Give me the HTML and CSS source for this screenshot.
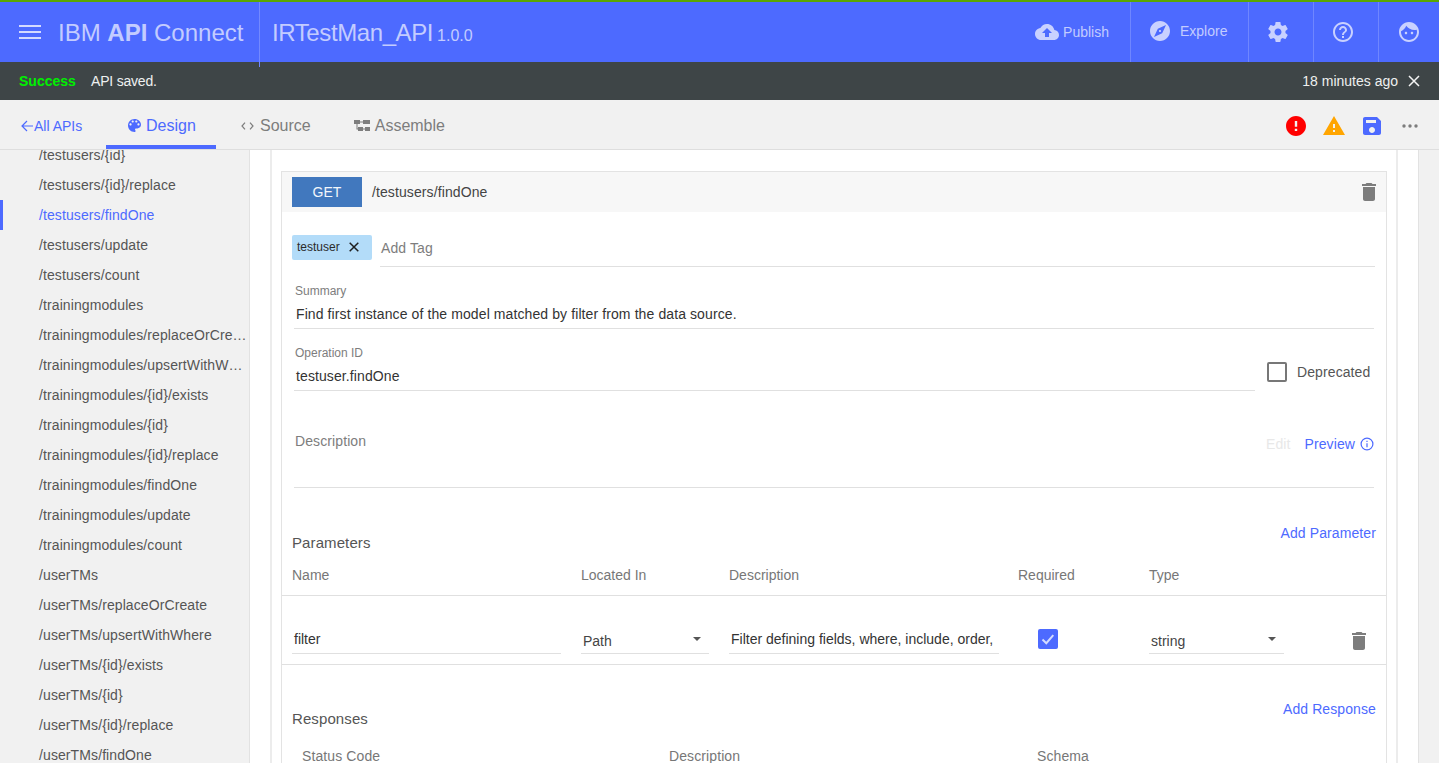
FILE: index.html
```html
<!DOCTYPE html>
<html lang="en">
<head>
  <meta charset="UTF-8">
  <title>IBM API Connect</title>
  <link rel="stylesheet" href="styles.css">
</head>
<body>
  <header class="topbar">
    <div class="brand">
      <svg class="menu-icon" width="22" height="14" viewBox="0 0 22 14"><path d="M0 0h22v2H0zM0 6h22v2H0zM0 12h22v2H0z"/></svg>
      <span class="brand-name">IBM <b>API</b> Connect</span>
    </div>
    <div class="api-title">IRTestMan_API <small>1.0.0</small></div>
    <div class="top-actions">
      <div class="top-item publish">
        <svg width="24" height="24" viewBox="0 0 24 24"><path d="M19.35 10.04C18.67 6.59 15.64 4 12 4 9.11 4 6.6 5.64 5.35 8.04 2.34 8.36 0 10.91 0 14c0 3.31 2.69 6 6 6h13c2.76 0 5-2.24 5-5 0-2.64-2.05-4.78-4.65-4.96zM14 13v4h-4v-4H7l5-5 5 5h-3z"/></svg>
        Publish
      </div>
      <div class="top-item explore">
        <svg width="24" height="24" viewBox="0 0 24 24"><path d="M12 10.9c-.61 0-1.1.49-1.1 1.1s.49 1.1 1.1 1.1c.61 0 1.1-.49 1.1-1.1s-.49-1.1-1.1-1.1zM12 2C6.48 2 2 6.48 2 12s4.48 10 10 10 10-4.48 10-10S17.52 2 12 2zm2.19 12.19L6 18l3.81-8.19L18 6l-3.81 8.19z"/></svg>
        Explore
      </div>
      <div class="top-item icon-only">
        <svg width="24" height="24" viewBox="0 0 24 24"><path d="M19.43 12.98c.04-.32.07-.64.07-.98s-.03-.66-.07-.98l2.11-1.65c.19-.15.24-.42.12-.64l-2-3.46c-.12-.22-.39-.3-.61-.22l-2.49 1c-.52-.4-1.08-.73-1.69-.98l-.38-2.65C14.46 2.18 14.25 2 14 2h-4c-.25 0-.46.18-.49.42l-.38 2.65c-.61.25-1.17.59-1.69.98l-2.49-1c-.23-.09-.49 0-.61.22l-2 3.46c-.13.22-.07.49.12.64l2.11 1.65c-.04.32-.07.65-.07.98s.03.66.07.98l-2.11 1.65c-.19.15-.24.42-.12.64l2 3.46c.12.22.39.3.61.22l2.49-1c.52.4 1.08.73 1.69.98l.38 2.65c.03.24.24.42.49.42h4c.25 0 .46-.18.49-.42l.38-2.65c.61-.25 1.17-.59 1.69-.98l2.49 1c.23.09.49 0 .61-.22l2-3.46c.12-.22.07-.49-.12-.64l-2.11-1.65zM12 15.5c-1.93 0-3.5-1.57-3.5-3.5s1.57-3.5 3.5-3.5 3.5 1.57 3.5 3.5-1.57 3.5-3.5 3.5z"/></svg>
      </div>
      <div class="top-item icon-only">
        <svg width="24" height="24" viewBox="0 0 24 24"><path d="M11 18h2v-2h-2v2zm1-16C6.48 2 2 6.48 2 12s4.48 10 10 10 10-4.48 10-10S17.52 2 12 2zm0 18c-4.41 0-8-3.59-8-8s3.59-8 8-8 8 3.59 8 8-3.59 8-8 8zm0-14c-2.21 0-4 1.79-4 4h2c0-1.1.9-2 2-2s2 .9 2 2c0 2-3 1.75-3 5h2c0-2.25 3-2.5 3-5 0-2.21-1.79-4-4-4z"/></svg>
      </div>
      <div class="top-item icon-only last">
        <svg width="24" height="24" viewBox="0 0 24 24"><path d="M9 11.75c-.69 0-1.25.56-1.25 1.25s.56 1.25 1.25 1.25 1.25-.56 1.25-1.25-.56-1.25-1.25-1.25zm6 0c-.69 0-1.25.56-1.25 1.25s.56 1.25 1.25 1.25 1.25-.56 1.25-1.25-.56-1.25-1.25-1.25zM12 2C6.48 2 2 6.48 2 12s4.48 10 10 10 10-4.48 10-10S17.52 2 12 2zm0 18c-4.41 0-8-3.59-8-8 0-.29.02-.58.05-.86 2.36-1.05 4.23-2.98 5.21-5.37C11.07 8.33 14.05 10 17.42 10c.78 0 1.53-.09 2.25-.26.21.71.33 1.47.33 2.26 0 4.41-3.59 8-8 8z"/></svg>
      </div>
    </div>
  </header>

  <div class="alert">
    <span class="alert-title">Success</span>
    <span class="alert-text">API saved.</span>
    <span class="alert-time">18 minutes ago</span>
    <svg class="alert-close" width="12" height="12" viewBox="0 0 12 12"><path d="M1 1l10 10M11 1L1 11"/></svg>
  </div>

  <nav class="tabs">
    <a class="back-link">
      <svg width="12" height="12" viewBox="0 0 12 12"><path d="M6 1L1 6l5 5M1 6h11"/></svg>All APIs
    </a>
    <a class="tab active">
      <svg width="13" height="13" viewBox="3 3 18 18"><path d="M12 3c-4.97 0-9 4.03-9 9s4.03 9 9 9c.83 0 1.5-.67 1.5-1.5 0-.39-.15-.74-.39-1.01-.23-.26-.38-.61-.38-.99 0-.83.67-1.5 1.5-1.5H16c2.76 0 5-2.24 5-5 0-4.42-4.03-8-9-8zm-5.5 9c-.83 0-1.5-.67-1.5-1.5S5.67 9 6.5 9 8 9.67 8 10.5 7.33 12 6.5 12zm3-4C8.67 8 8 7.33 8 6.5S8.67 5 9.5 5s1.5.67 1.5 1.5S10.33 8 9.5 8zm5 0c-.83 0-1.5-.67-1.5-1.5S13.67 5 14.5 5s1.5.67 1.5 1.5S15.33 8 14.5 8zm3 4c-.83 0-1.5-.67-1.5-1.5S16.67 9 17.5 9s1.5.67 1.5 1.5-.67 1.5-1.5 1.5z"/></svg>
      Design
    </a>
    <a class="tab source">
      <svg class="code-icon" width="13" height="8" viewBox="0 0 13 8"><path d="M4 .7L1 4l3 3.3M9 .7L12 4 9 7.3"/></svg>
      Source
    </a>
    <a class="tab assemble">
      <svg width="16" height="12" viewBox="0 0 16 12"><path d="M0 0h6v4H0zM9 0h7v4H9zM6 1.500h3v1H6zM4 7h5v4H4zM11 7h5v4h-5zM9 8.500h2v1H9zM2.500 4h1v4.500h-1zM2.500 8.500H4v1H2.500z"/></svg>
      Assemble
    </a>
    <div class="tab-tools">
      <svg class="tool-error" width="24" height="24" viewBox="0 0 24 24"><path d="M12 2C6.48 2 2 6.48 2 12s4.480 10 10 10 10-4.480 10-10S17.520 2 12 2zm1.200 15h-2.400v-2.300h2.400V17zm0-4.300h-2.400V7h2.400v5.700z"/></svg>
      <svg class="tool-warn" width="24" height="24" viewBox="0 0 24 24"><path d="M1 21h22L12 2 1 21zm12-3h-2v-2h2v2zm0-4h-2v-4h2v4z"/></svg>
      <svg class="tool-save" width="24" height="24" viewBox="0 0 24 24"><path d="M17 3H5c-1.110 0-2 .9-2 2v14c0 1.100.89 2 2 2h14c1.100 0 2-.9 2-2V7l-4-4zm-5 16c-1.660 0-3-1.340-3-3s1.340-3 3-3 3 1.340 3 3-1.340 3-3 3zm4-10H6V6h10v3z"/></svg>
      <svg class="tool-more" width="16" height="4" viewBox="0 0 16 4"><circle cx="2" cy="2" r="1.700"/><circle cx="8" cy="2" r="1.700"/><circle cx="14" cy="2" r="1.700"/></svg>
    </div>
  </nav>

  <div class="layout">
    <aside class="sidebar">
      <ul class="path-list">
        <li>/testusers/{id}</li>
        <li>/testusers/{id}/replace</li>
        <li class="selected">/testusers/findOne</li>
        <li>/testusers/update</li>
        <li>/testusers/count</li>
        <li>/trainingmodules</li>
        <li>/trainingmodules/replaceOrCreate</li>
        <li>/trainingmodules/upsertWithWhere</li>
        <li>/trainingmodules/{id}/exists</li>
        <li>/trainingmodules/{id}</li>
        <li>/trainingmodules/{id}/replace</li>
        <li>/trainingmodules/findOne</li>
        <li>/trainingmodules/update</li>
        <li>/trainingmodules/count</li>
        <li>/userTMs</li>
        <li>/userTMs/replaceOrCreate</li>
        <li>/userTMs/upsertWithWhere</li>
        <li>/userTMs/{id}/exists</li>
        <li>/userTMs/{id}</li>
        <li>/userTMs/{id}/replace</li>
        <li>/userTMs/findOne</li>
      </ul>
    </aside>

    <main class="main">
      <section class="panel">
        <div class="card">
          <div class="op-header">
            <span class="method">GET</span>
            <span class="op-path">/testusers/findOne</span>
            <svg class="trash" width="24" height="24" viewBox="0 0 24 24"><path d="M6 19c0 1.100.9 2 2 2h8c1.100 0 2-.9 2-2V7H6v12zM19 4h-3.500l-1-1h-5l-1 1H5v2h14V4z"/></svg>
          </div>

          <div class="tag-row">
            <span class="chip">testuser
              <svg width="10" height="10" viewBox="0 0 10 10"><path d="M.7.7l8.600 8.600M9.300.7L.7 9.300"/></svg>
            </span>
            <div class="tag-input">Add Tag</div>
          </div>

          <div class="fields">
            <div class="field">
              <div class="field-label">Summary</div>
              <div class="field-value">Find first instance of the model matched by filter from the data source.</div>
            </div>
            <div class="field-row">
              <div class="field grow">
                <div class="field-label">Operation ID</div>
                <div class="field-value">testuser.findOne</div>
              </div>
              <label class="deprecated"><span class="checkbox"></span>Deprecated</label>
            </div>
            <div class="description">
              <span class="description-label">Description</span>
              <span class="edit-link">Edit</span>
              <span class="preview-link">Preview
                <svg width="14" height="14" viewBox="0 0 14 14"><circle cx="7" cy="7" r="5.900"/><path d="M7 6.200v4M7 3.700v1.300"/></svg>
              </span>
            </div>
          </div>

          <div class="section-head params-head">
            <h3>Parameters</h3>
            <a class="add-link">Add Parameter</a>
          </div>
          <div class="param-grid param-labels">
            <span>Name</span>
            <span>Located In</span>
            <span>Description</span>
            <span>Required</span>
            <span>Type</span>
          </div>
          <div class="param-grid param-row">
            <div class="cell-input name-cell">filter</div>
            <div class="cell-select located-cell">Path<i class="caret"></i></div>
            <div class="cell-input desc-cell">Filter defining fields, where, include, order,</div>
            <span class="checkbox checked">
              <svg width="20" height="20" viewBox="0 0 20 20"><path d="M4.500 10.500l3.800 3.700 7-8"/></svg>
            </span>
            <div class="cell-select type-cell">string<i class="caret"></i></div>
            <svg class="trash row-trash" width="24" height="24" viewBox="0 0 24 24"><path d="M6 19c0 1.100.9 2 2 2h8c1.100 0 2-.9 2-2V7H6v12zM19 4h-3.500l-1-1h-5l-1 1H5v2h14V4z"/></svg>
          </div>

          <div class="section-head responses-head">
            <h3>Responses</h3>
            <a class="add-link">Add Response</a>
          </div>
          <div class="response-labels">
            <span>Status Code</span>
            <span>Description</span>
            <span>Schema</span>
          </div>
        </div>
      </section>
    </main>
    <div class="scroll-gutter"></div>
  </div>
</body>
</html>
```

FILE: styles.css
```css
* {
  box-sizing: border-box;
}
html, body {
  height: 763px;
  overflow: hidden;
}
body {
  margin: 0;
  font-family: "Liberation Sans", Arial, sans-serif;
  font-size: 14px;
  letter-spacing: 0.1px;
  color: #3d3d3d;
  background: #fff;
}

/* top bar */
.topbar {
  display: flex;
  height: 62px;
  background: #4d6aff;
  border-top: 2px solid #5aa700;
  color: #c3ccff;
  position: relative;
}
.brand {
  display: flex;
  align-items: center;
  width: 260px;
  padding-left: 19px;
  position: relative;
}
.brand::after {
  content: "";
  position: absolute;
  right: 0;
  top: 0;
  width: 1px;
  height: 65px;
  background: #7389ff;
}
.menu-icon {
  fill: #d4daff;
  margin-right: 17px;
}
.brand-name {
  padding-top: 2px;
  font-size: 24px;
  letter-spacing: 0;
}
.brand-name b {
  font-weight: 700;
}
.api-title {
  display: flex;
  align-items: baseline;
  padding: 17px 0 0 12px;
  font-size: 24px;
  letter-spacing: -0.4px;
}
.api-title small {
  font-size: 16px;
  margin-left: 4px;
  letter-spacing: 0;
}
.top-actions {
  display: flex;
  margin-left: auto;
}
.top-item {
  display: flex;
  align-items: center;
  border-right: 1px solid #6f86ff;
  height: 60px;
  letter-spacing: 0;
}
.top-item svg {
  fill: #c9d1ff;
}
.publish {
  padding-right: 21px;
}
.publish svg {
  margin-right: 4px;
}
.explore {
  width: 118px;
  padding-left: 17px;
  padding-bottom: 2px;
}
.explore svg {
  margin-right: 8px;
}
.icon-only {
  width: 65px;
  justify-content: center;
  padding-right: 6px;
}
.icon-only.last {
  width: 60px;
  padding-right: 1px;
  border-right: 0;
}

/* alert */
.alert {
  display: flex;
  align-items: center;
  height: 38px;
  padding: 0 19px;
  background: #3e4547;
  color: #eef0f0;
  letter-spacing: 0;
}
.alert-title {
  width: 72px;
  font-weight: 700;
  color: #00f000;
}
.alert-text {
  letter-spacing: -0.2px;
}
.alert-time {
  margin-left: auto;
  margin-right: 10px;
}
.alert-close {
  fill: none;
  stroke: #f4f4f4;
  stroke-width: 1.500;
}

/* tabs */
.tabs {
  display: flex;
  height: 50px;
  padding-left: 21px;
  background: #f1f1f1;
  border-bottom: 1px solid #dedede;
}
.tabs a {
  display: flex;
  align-items: center;
}
.back-link {
  width: 85px;
  color: #4d6aff;
  padding-top: 3px;
  letter-spacing: 0;
}
.back-link svg {
  fill: none;
  stroke: #4d6aff;
  stroke-width: 1.200;
  margin-right: 1px;
}
.tab {
  font-size: 16px;
  color: #7d7d7d;
  height: 49px;
  padding-top: 2px;
  letter-spacing: 0;
}
.tab svg {
  fill: #7d7d7d;
}
.tab.active {
  width: 110px;
  padding-left: 22px;
  padding-top: 6px;
  color: #4d6aff;
  border-bottom: 4px solid #4d6aff;
}
.tab.active svg {
  fill: #4d6aff;
  margin-right: 5px;
}
.source {
  margin-left: 25px;
}
.source svg {
  margin-right: 6px;
}
.code-icon {
  fill: none !important;
  stroke: #7d7d7d;
  stroke-width: 1.200;
}
.assemble {
  margin-left: 43px;
}
.assemble svg {
  margin-right: 5px;
}
.tab-tools {
  display: flex;
  align-items: center;
  margin-left: auto;
  padding-right: 21px;
  padding-top: 2px;
}
.tool-error {
  fill: #f00;
}
.tool-warn {
  fill: #ffa500;
  margin-left: 14px;
}
.tool-save {
  fill: #4d6aff;
  margin-left: 14px;
}
.tool-more {
  fill: #7d7d7d;
  margin-left: 18px;
}

/* layout */
.layout {
  display: flex;
  height: 613px;
}
.sidebar {
  width: 250px;
  flex: none;
  overflow: hidden;
  background: #f1f1f1;
  border-right: 1px solid #e2e2e2;
}
.path-list {
  list-style: none;
  margin: -10px 0 0;
  padding: 0;
}
.path-list li {
  height: 30px;
  line-height: 30px;
  padding: 0 2px 0 39px;
  color: #555;
  white-space: nowrap;
  overflow: hidden;
  text-overflow: ellipsis;
}
.path-list li.selected {
  color: #4d6aff;
  border-left: 3px solid #4d6aff;
  padding-left: 36px;
}
.main {
  flex: 1;
  padding: 0 20px;
  overflow: hidden;
}
.scroll-gutter {
  width: 21px;
  flex: none;
  background: #f1f1f1;
  border-left: 1px solid #e2e2e2;
}
.panel {
  height: 100%;
  padding: 21px 9px 0 9px;
  border-left: 2px solid #ececec;
  border-right: 2px solid #ececec;
}
.card {
  border: 1px solid #e3e3e3;
  border-bottom: 0;
  min-height: 640px;
}

/* operation header */
.op-header {
  display: flex;
  align-items: center;
  height: 40px;
  padding: 0 5px 0 10px;
  background: #f7f7f7;
}
.method {
  width: 70px;
  height: 30px;
  line-height: 30px;
  text-align: center;
  background: #4178be;
  color: #f2f6fb;
  letter-spacing: 0;
}
.op-path {
  margin-left: 10px;
  color: #444;
}
.trash {
  fill: #7d7d7d;
  margin-left: auto;
}

/* tags */
.tag-row {
  display: flex;
  margin-top: 23px;
  padding: 0 11px 0 10px;
}
.chip {
  display: flex;
  align-items: center;
  width: 80px;
  height: 25px;
  padding: 0 0 2px 5px;
  border-radius: 2px;
  background: #b3dcf9;
  color: #2b2b2b;
  font-size: 12px;
  letter-spacing: 0;
}
.chip svg {
  fill: none;
  stroke: #1f1f1f;
  stroke-width: 1.500;
  margin-left: 9px;
}
.tag-input {
  flex: 1;
  height: 32px;
  margin-left: 8px;
  padding-left: 1px;
  line-height: 26px;
  border-bottom: 1px solid #e0e0e0;
  color: #7d7d7d;
}

/* form fields */
.fields {
  padding: 0 12px 0 12px;
}
.field {
  margin-top: 16px;
  border-bottom: 1px solid #e0e0e0;
}
.field-label {
  height: 16px;
  line-height: 16px;
  padding-left: 1px;
  font-size: 12px;
  letter-spacing: 0;
  color: #7d7d7d;
}
.field-value {
  height: 29px;
  padding: 2px 0 0 2px;
  line-height: 27px;
  color: #333;
}
.field-row {
  display: flex;
  align-items: flex-start;
}
.grow {
  flex: 1;
}
.deprecated {
  display: flex;
  align-items: center;
  width: 107px;
  margin: 33px 0 0 12px;
  color: #555;
}
.checkbox {
  display: block;
  flex: none;
  width: 20px;
  height: 20px;
  margin-right: 10px;
  border: 2px solid #777;
  border-radius: 2px;
}
.description {
  display: flex;
  height: 56px;
  margin-top: 41px;
  padding-left: 1px;
  border-bottom: 1px solid #e0e0e0;
}
.description-label {
  line-height: 18px;
  color: #7d7d7d;
}
.edit-link {
  margin-left: auto;
  margin-top: 3px;
  line-height: 18px;
  color: #e8e8e8;
}
.preview-link {
  display: flex;
  align-items: center;
  height: 18px;
  margin: 3px 0 0 14px;
  color: #4d6aff;
}
.preview-link svg {
  fill: none;
  stroke: #4d6aff;
  stroke-width: 1.200;
  margin-left: 5px;
}

/* parameters + responses */
.section-head {
  display: flex;
  justify-content: space-between;
  height: 28px;
  padding: 0 10px;
}
.section-head h3 {
  align-self: flex-end;
  margin: 0;
  font-size: 15px;
  font-weight: 400;
  line-height: 18px;
  color: #555;
}
.add-link {
  line-height: 18px;
  color: #4d6aff;
}
.params-head {
  margin-top: 36px;
}
.responses-head {
  margin-top: 35px;
}
.param-grid {
  display: grid;
  grid-template-columns: 289px 148px 289px 131px 135px 1fr;
  padding-left: 10px;
  border-bottom: 1px solid #e0e0e0;
  letter-spacing: 0;
}
.param-labels {
  height: 44px;
  padding-top: 15px;
  line-height: 16px;
  color: #777;
}
.param-row {
  height: 69px;
  align-items: end;
  padding-bottom: 10px;
}
.cell-input,
.cell-select {
  height: 29px;
  line-height: 28px;
  border-bottom: 1px solid #e0e0e0;
  padding-left: 2px;
  color: #333;
}
.name-cell {
  width: 269px;
}
.located-cell {
  width: 128px;
}
.desc-cell {
  width: 270px;
  white-space: nowrap;
}
.cell-select {
  display: flex;
  justify-content: space-between;
  align-items: center;
  padding: 4px 8px 0 2px;
  color: #444;
}
.caret {
  width: 0;
  height: 0;
  border: 4px solid transparent;
  border-top-color: #555;
  border-bottom: 0;
  margin-top: -4px;
}
.checkbox.checked {
  margin: 0 0 5px 20px;
  border: 0;
  background: #4d6aff;
}
.checkbox.checked svg {
  display: block;
  fill: none;
  stroke: #d3dbff;
  stroke-width: 2;
}
.row-trash {
  margin: 0 0 1px 63px;
}
.response-labels {
  display: grid;
  grid-template-columns: 367px 368px 1fr;
  margin-top: 20px;
  padding-left: 20px;
  line-height: 16px;
  color: #777;
}
```
